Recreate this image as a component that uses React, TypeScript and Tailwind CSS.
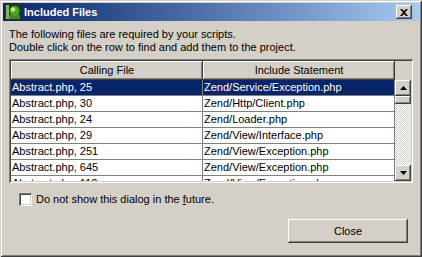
const rows = [
  ["Abstract.php, 25", "Zend/Service/Exception.php"],
  ["Abstract.php, 30", "Zend/Http/Client.php"],
  ["Abstract.php, 24", "Zend/Loader.php"],
  ["Abstract.php, 29", "Zend/View/Interface.php"],
  ["Abstract.php, 251", "Zend/View/Exception.php"],
  ["Abstract.php, 645", "Zend/View/Exception.php"],
  ["Abstract.php, 112", "Zend/View/Exception.php"],
];

const raised =
  "shadow-[inset_-1px_-1px_0_#404040,inset_1px_1px_0_#ffffff,inset_-2px_-2px_0_#808080,inset_2px_2px_0_#d4d0c8]";

const sunken =
  "shadow-[inset_1px_1px_0_#808080,inset_-1px_-1px_0_#ffffff,inset_2px_2px_0_#404040,inset_-2px_-2px_0_#d4d0c8]";

export default function App() {
  return (
    <div className="w-[422px] h-[257px] bg-[#d4d0c8] p-[3px] font-['Liberation_Sans',Arial,sans-serif] text-[11px] text-black shadow-[inset_1px_1px_0_#d4d0c8,inset_-1px_-1px_0_#404040,inset_2px_2px_0_#ffffff,inset_-2px_-2px_0_#808080] overflow-hidden">
      <TitleBar />

      <div className="px-[6px]">
        <p className="mt-[7px] leading-[13px]">
          The following files are required by your scripts.
          <br />
          Double click on the row to find and add them to the project.
        </p>

        <FileList />

        <label className="mt-[10px] ml-[10px] flex items-center gap-[4px] h-[13px]">
          <span className={`w-[13px] h-[13px] bg-white ${sunken}`} />
          <span className="leading-[13px]">
            Do not show this dialog in the <span className="underline">f</span>uture.
          </span>
        </label>

        <div className="mt-[13px] pr-[5px] flex justify-end">
          <button
            className={`w-[120px] h-[24px] bg-[#d4d0c8] text-[11px] ${raised}`}
          >
            Close
          </button>
        </div>
      </div>
    </div>
  );
}

function TitleBar() {
  return (
    <div className="h-[18px] flex items-center bg-gradient-to-r from-[#0a246a] to-[#a6caf0]">
      <svg width="16" height="16" viewBox="0 0 16 16" className="ml-[2px]">
        <rect x="0" y="0" width="16" height="16" fill="#1d3d12" />
        <rect x="1" y="1" width="3" height="14" fill="#7fb85a" />
        <rect x="4" y="11" width="11" height="4" fill="#4c7f2f" />
        <circle cx="9.5" cy="7" r="5" fill="#4fa52a" />
        <circle cx="8" cy="5.5" r="2.2" fill="#b8ec8c" />
      </svg>
      <span className="ml-[3px] text-white font-bold text-[11px]">
        Included Files
      </span>
      <div className="flex-1" />
      <div
        className={`mr-[7px] w-[16px] h-[14px] bg-[#d4d0c8] flex items-center justify-center ${raised}`}
      >
        <svg width="8" height="7" viewBox="0 0 8 7">
          <path d="M0 0h2l2 2 2-2h2L5 3.5 8 7H6L4 5 2 7H0l3-3.5z" fill="#000" />
        </svg>
      </div>
    </div>
  );
}

function FileList() {
  return (
    <div className={`mt-[5px] w-[404px] h-[124px] bg-white p-[2px] ${sunken}`}>
      <div className="h-[19px] flex bg-[#d4d0c8]">
        <HeaderCell label="Calling File" />
        <HeaderCell label="Include Statement" />
        <div className="w-[16px]" />
      </div>

      <div className="h-[101px] flex">
        <div className="w-[384px] h-full overflow-hidden">
          {rows.map((row, i) => (
            <div key={i} className="h-[16px] flex border-b border-[#808080]">
              {row.map((cell, j) => (
                <div
                  key={j}
                  className={
                    i === 0
                      ? "w-[192px] pl-[1px] leading-[15px] border-r border-[#808080] bg-[#0a246a] text-white"
                      : "w-[192px] pl-[1px] leading-[15px] border-r border-[#808080]"
                  }
                >
                  {cell}
                </div>
              ))}
            </div>
          ))}
        </div>

        <div className="w-[16px] h-full flex flex-col">
          <ScrollButton up />
          <div className={`h-[8px] bg-[#d4d0c8] ${raised}`} />
          <div className="flex-1 bg-[repeating-conic-gradient(#d4d0c8_0%_25%,#ffffff_0%_50%)] bg-[length:2px_2px]" />
          <ScrollButton />
        </div>
      </div>
    </div>
  );
}

function HeaderCell({ label }: { label: string }) {
  return (
    <div
      className={`w-[192px] h-full flex items-center justify-center ${raised}`}
    >
      {label}
    </div>
  );
}

function ScrollButton({ up }: { up?: boolean }) {
  return (
    <div
      className={`h-[16px] bg-[#d4d0c8] flex items-center justify-center ${raised}`}
    >
      <svg width="7" height="4" viewBox="0 0 7 4">
        <path d={up ? "M3.5 0L7 4H0z" : "M0 0h7L3.5 4z"} fill="#000" />
      </svg>
    </div>
  );
}
